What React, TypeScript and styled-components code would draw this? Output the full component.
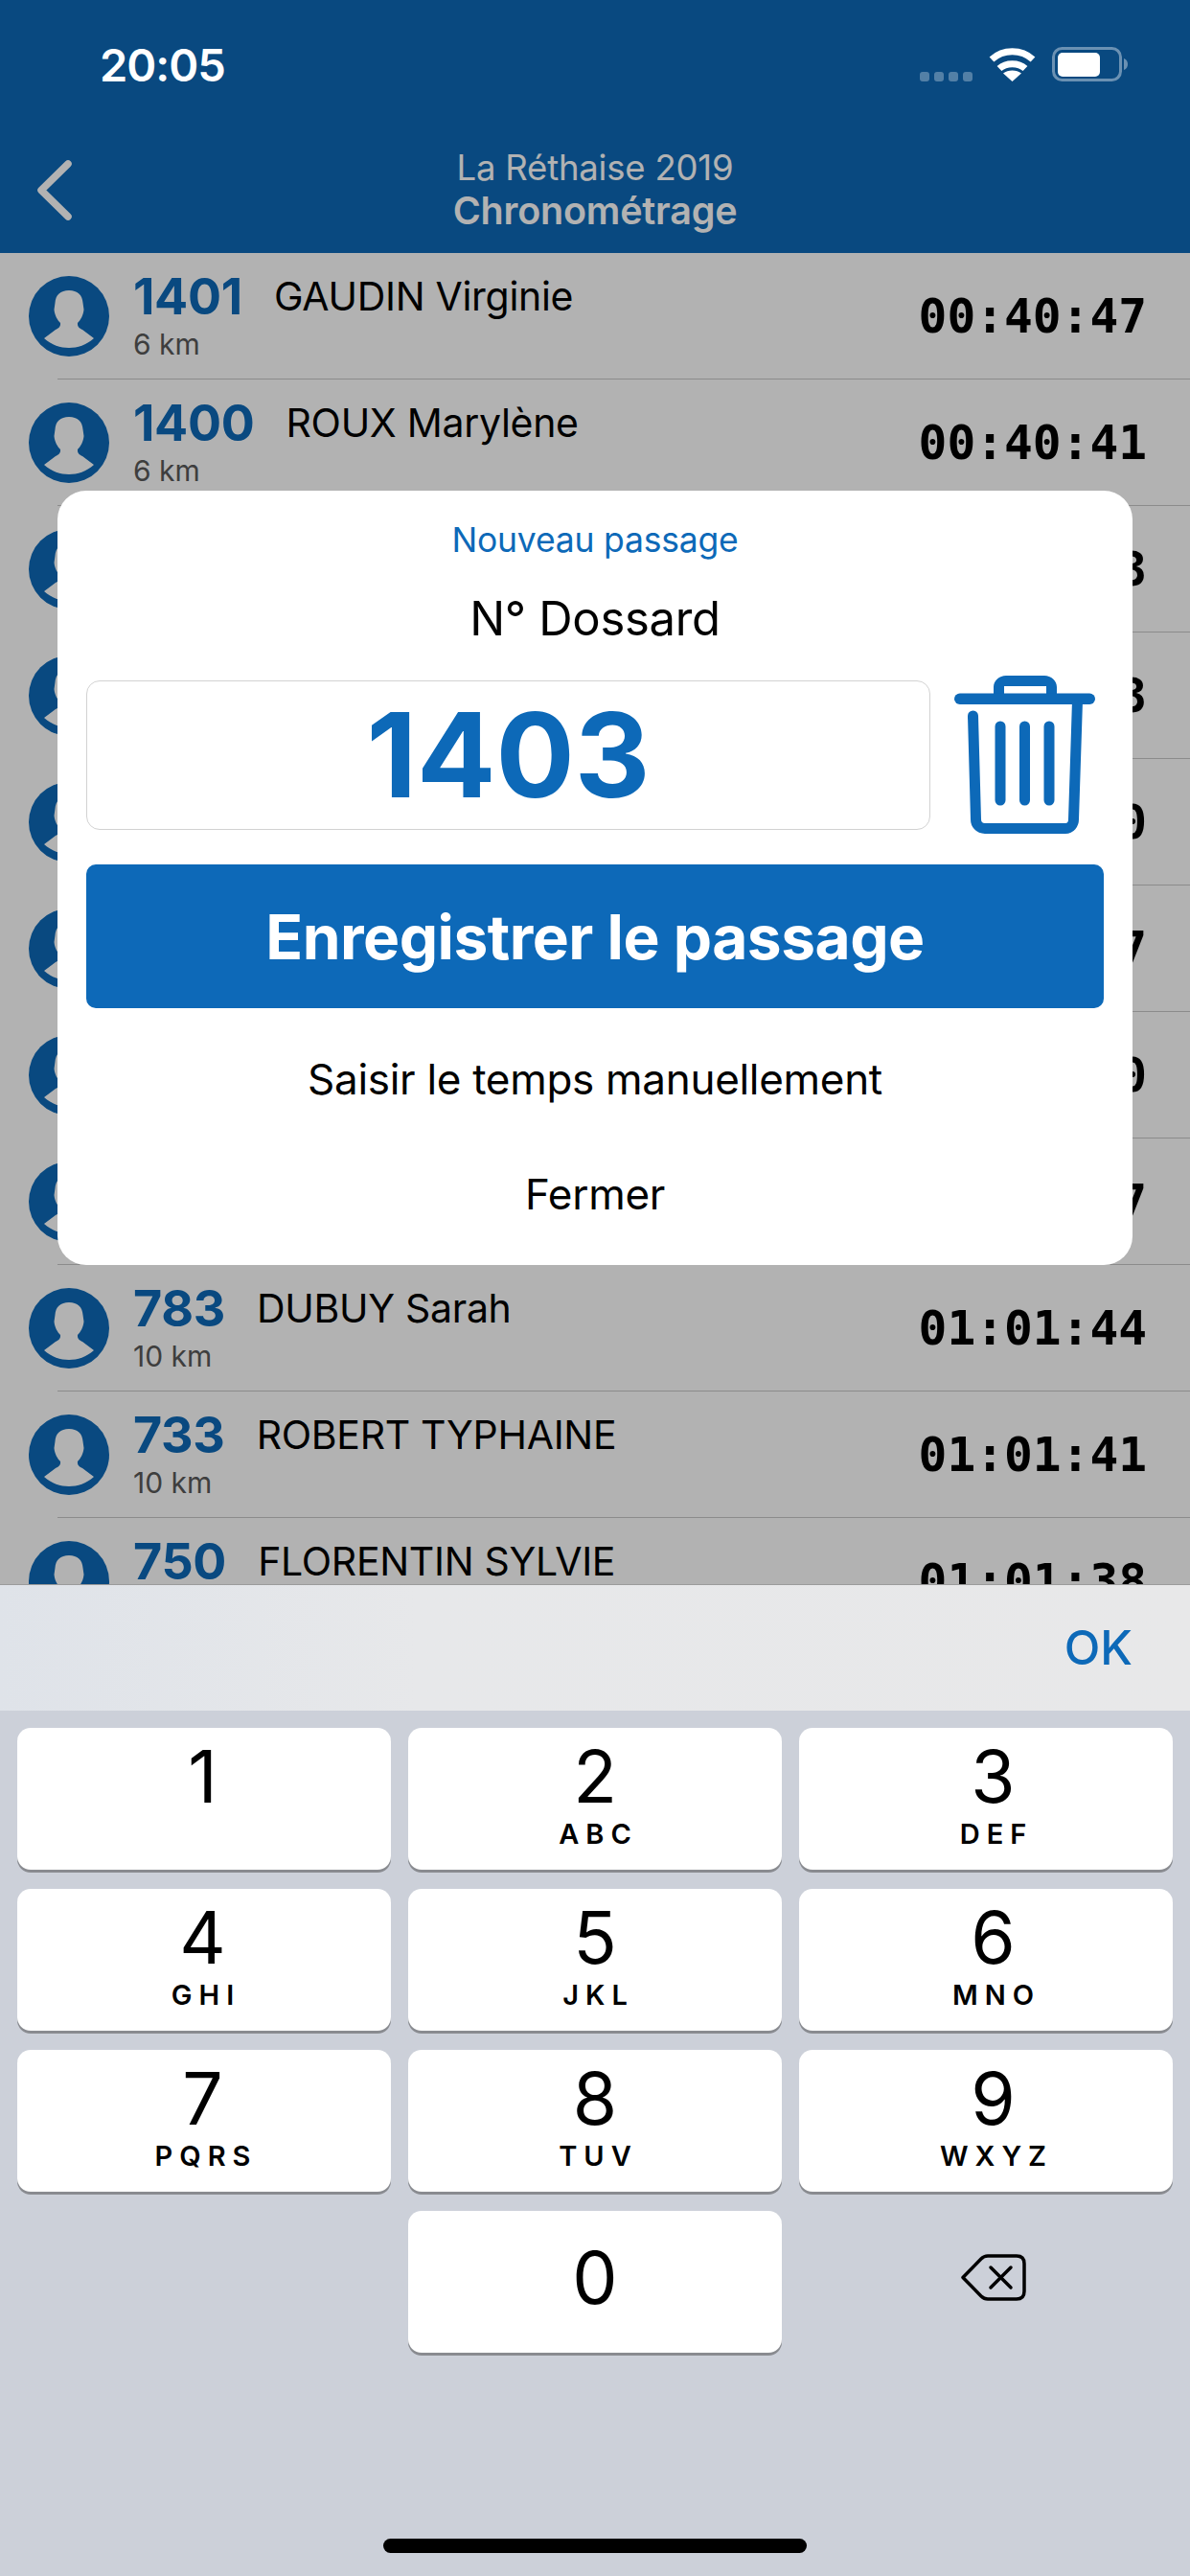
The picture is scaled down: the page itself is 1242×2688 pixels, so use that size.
import React from 'react';
import styled, { createGlobalStyle } from 'styled-components';

const BLUE = '#0d69b8';
const SANS = 'Inter, "Noto Sans", sans-serif';

const GlobalStyle = createGlobalStyle`
  html, body {
    margin: 0;
    padding: 0;
    background: #fff;
  }
  body {
    font-family: ${SANS};
  }
`;

const Page = styled.div`
  width: 1242px;
  height: 2688px;
  display: flex;
  flex-direction: column;
  overflow: hidden;
  background: #fff;
`;

const Upper = styled.div`
  position: relative;
  height: 1653px;
  display: flex;
  flex-direction: column;
  overflow: hidden;
`;

const Header = styled.header`
  height: 264px;
  flex: none;
  background: ${BLUE};
  display: flex;
  flex-direction: column;
`;

const StatusBar = styled.div`
  position: relative;
  z-index: 2;
  height: 132px;
  display: flex;
  align-items: flex-start;
  justify-content: space-between;
  padding: 49px 65px 0 104px;
  box-sizing: border-box;
`;

const Clock = styled.span`
  color: #fff;
  font-size: 47px;
  font-weight: 600;
  line-height: 38px;
  letter-spacing: -1px;
`;

const StatusIcons = styled.div`
  display: flex;
  align-items: flex-end;
`;

const SignalDots = styled.div`
  display: flex;
  gap: 5px;
  margin-right: 17px;
`;

const SignalDot = styled.i`
  display: block;
  width: 10px;
  height: 10px;
  border-radius: 3px;
  background: rgba(255, 255, 255, 0.3);
`;

const NavBar = styled.div`
  position: relative;
  flex: 1;
  display: flex;
  flex-direction: column;
  align-items: center;
  color: #fff;
  padding-top: 21px;
`;

const BackButton = styled.svg`
  position: absolute;
  left: 39px;
  top: 35px;
`;

const NavSub = styled.div`
  font-size: 36.5px;
  line-height: 44px;
  letter-spacing: -0.2px;
`;

const NavTitle = styled.div`
  font-size: 39.5px;
  font-weight: 600;
  line-height: 46px;
  letter-spacing: -0.2px;
`;

const List = styled.div`
  flex: 1;
  min-height: 0;
  overflow: hidden;
`;

const Row = styled.div`
  height: 131px;
  display: flex;
  align-items: flex-start;
  padding: 24px 45px 0 30px;
  box-sizing: border-box;
`;

const Separator = styled.div`
  height: 1px;
  margin-left: 60px;
  background: #c8c8c8;
`;

const Info = styled.div`
  flex: 1;
  margin-left: 25px;
  min-width: 0;
`;

const TopLine = styled.div`
  display: flex;
  align-items: baseline;
  height: 50px;
  margin-top: -3px;
`;

const Bib = styled.span`
  color: ${BLUE};
  font-size: 52px;
  font-weight: 700;
  line-height: 50px;
  margin-right: 33px;
  letter-spacing: -0.3px;
`;

const Name = styled.span`
  color: #000;
  font-size: 41px;
  line-height: 50px;
  position: relative;
  top: -4px;
  letter-spacing: -0.3px;
`;

const Distance = styled.div`
  color: #5a5a5a;
  font-size: 30px;
  line-height: 36px;
  margin-top: 6px;
`;

const Time = styled.span`
  flex: none;
  color: #000;
  font-family: 'DejaVu Sans Mono', monospace;
  font-size: 49.5px;
  font-weight: 700;
  line-height: 85px;
`;

const Backdrop = styled.div`
  position: absolute;
  inset: 0;
  z-index: 1;
  background: rgba(0, 0, 0, 0.3);
`;

const Dialog = styled.div`
  position: absolute;
  z-index: 3;
  top: 512px;
  left: 60px;
  width: 1122px;
  height: 808px;
  box-sizing: border-box;
  padding: 30px 30px 0;
  border-radius: 30px;
  background: #fff;
  display: flex;
  flex-direction: column;
  align-items: stretch;
`;

const DialogTitle = styled.div`
  color: ${BLUE};
  font-size: 35.5px;
  line-height: 44px;
  text-align: center;
  letter-spacing: -0.2px;
`;

const BibLabel = styled.div`
  color: #000;
  font-size: 49px;
  line-height: 60px;
  text-align: center;
  margin-top: 30px;
  letter-spacing: -0.3px;
`;

const EntryRow = styled.div`
  display: flex;
  align-items: center;
  justify-content: space-between;
  margin-top: 29px;
  padding-right: 9px;
  height: 165px;
`;

const BibInput = styled.div`
  width: 881px;
  height: 156px;
  box-sizing: border-box;
  border: 1.5px solid #d2d2d2;
  border-radius: 14px;
  display: flex;
  align-items: center;
  justify-content: center;
  color: ${BLUE};
  font-size: 122px;
  font-weight: 700;
`;

const SaveButton = styled.div`
  height: 150px;
  margin-top: 32px;
  border-radius: 10px;
  background: ${BLUE};
  color: #fff;
  font-size: 64px;
  font-weight: 700;
  letter-spacing: -0.5px;
  display: flex;
  align-items: center;
  justify-content: center;
`;

const DialogActions = styled.div`
  margin-top: 14px;
  display: flex;
  flex-direction: column;
`;

const DialogAction = styled.div`
  height: 120px;
  display: flex;
  align-items: center;
  justify-content: center;
  color: #000;
  font-size: 44px;
  letter-spacing: -0.3px;
`;

const Toolbar = styled.div`
  height: 132px;
  flex: none;
  box-sizing: border-box;
  border-top: 1px solid #9b9b9b;
  background: linear-gradient(90deg, #dfe3e9 0%, #e7e8ea 35%, #e8e8e9 100%);
  display: flex;
  align-items: center;
  justify-content: flex-end;
  padding-right: 60px;
`;

const ToolbarAction = styled.span`
  color: ${BLUE};
  font-size: 49px;
  font-weight: 500;
`;

const Keypad = styled.div`
  flex: 1;
  background: #ccd0d9;
  display: grid;
  grid-template-columns: repeat(3, 390px);
  grid-auto-rows: 148px;
  column-gap: 18px;
  row-gap: 20px;
  padding: 18px 18px 0;
  position: relative;
`;

const Key = styled.div<{ $column?: number }>`
  background: #fff;
  border-radius: 14px;
  box-shadow: 0 3px 0 #898b90;
  display: flex;
  flex-direction: column;
  align-items: center;
  box-sizing: border-box;
  padding-left: ${(p) => (p.$column === 2 ? '15px' : '0')};
  padding-right: ${(p) => (p.$column === 0 ? '3px' : '0')};
`;

const Digit = styled.span<{ $alone?: boolean }>`
  color: #000;
  font-size: 75px;
  font-weight: 400;
  line-height: 84px;
  margin-top: ${(p) => (p.$alone ? '28px' : '9px')};
`;

const Letters = styled.span`
  color: #000;
  font-size: 29px;
  font-weight: 600;
  line-height: 34px;
  letter-spacing: 7px;
  margin-right: -7px;
  margin-top: 1px;
`;

const EmptyKey = styled.div`
  box-sizing: border-box;
`;

const BackspaceKey = styled.div`
  display: flex;
  align-items: center;
  justify-content: center;
  padding: 0 0 8px 15px;
`;

const HomeBar = styled.div`
  position: absolute;
  left: 400px;
  bottom: 24px;
  width: 442px;
  height: 15px;
  border-radius: 8px;
  background: #000;
`;

const rows = [
  { bib: '1401', name: 'GAUDIN Virginie', km: '6 km', time: '00:40:47' },
  { bib: '1400', name: 'ROUX Marylène', km: '6 km', time: '00:40:41' },
  { time: '00:40:33' },
  { time: '00:40:23' },
  { time: '00:40:10' },
  { time: '01:02:07' },
  { time: '01:01:50' },
  { time: '01:01:47' },
  { bib: '783', name: 'DUBUY Sarah', km: '10 km', time: '01:01:44' },
  { bib: '733', name: 'ROBERT TYPHAINE', km: '10 km', time: '01:01:41' },
  { bib: '750', name: 'FLORENTIN SYLVIE', km: '10 km', time: '01:01:38' },
];

const keys = [
  ['1', ''],
  ['2', 'ABC'],
  ['3', 'DEF'],
  ['4', 'GHI'],
  ['5', 'JKL'],
  ['6', 'MNO'],
  ['7', 'PQRS'],
  ['8', 'TUV'],
  ['9', 'WXYZ'],
];

function Avatar() {
  return (
    <svg width="84" height="84" viewBox="0 0 84 84" style={{ flex: 'none' }}>
      <circle cx="42" cy="42" r="42" fill={BLUE} />
      <path
        fill="#fff"
        d="M42 15C33 15 28 20 27.500 28L26.500 35C27 41 30 46 33 49C33.500 53 31 54.500 28 56L16 65C24 72 33 75 42 75C51 75 60 72 68 65L56 56C53 54.500 50.500 53 51 49C54 46 57 41 57.500 35L56.500 28C56 20 51 15 42 15Z"
      />
    </svg>
  );
}

function Wifi() {
  return (
    <svg width="49" height="36" viewBox="0 0 49 36">
      <g fill="none" stroke="#fff" strokeWidth="7">
        <path d="M3 13C15 2 34 2 46 13" />
        <path d="M11 22.500C18 16 31 16 38 22.500" />
      </g>
      <path fill="#fff" d="M24.500 36L15 27.500C20 23.500 29 23.500 34 27.500Z" />
    </svg>
  );
}

function Battery() {
  return (
    <svg width="79" height="36" viewBox="0 0 79 36" style={{ marginLeft: 17 }}>
      <rect x="1.500" y="1.500" width="70" height="33" rx="9" fill="none" stroke="#fff" strokeOpacity="0.4" strokeWidth="3" />
      <rect x="6" y="6" width="44" height="25" rx="5" fill="#fff" />
      <path d="M75 12C78 13 79 15.500 79 18C79 20.500 78 23 75 24Z" fill="#fff" fillOpacity="0.4" />
    </svg>
  );
}

function TrashIcon() {
  return (
    <svg width="147" height="165" viewBox="36 26 147 165">
      <path
        fill={BLUE}
        d="M77 45V38C77 31 83 26 90 26H130C137 26 143 31 143 38V45H132V37H88V45Z"
      />
      <rect x="36" y="44.500" width="147" height="11.500" rx="5.750" fill={BLUE} />
      <g fill="none" stroke={BLUE} strokeWidth="11" strokeLinecap="round">
        <path d="M55.500 68L58.500 176C58.500 181 62 185.500 68 185.500H152C157 185.500 160.500 181 160.500 176L164.500 52" strokeLinecap="butt" />
        <path d="M55.500 68V69" />
        <path d="M84 79V156" />
        <path d="M109.500 79V156" />
        <path d="M135 79V156" />
      </g>
    </svg>
  );
}

function BackspaceIcon() {
  return (
    <svg width="68" height="50" viewBox="0 0 68 50">
      <g fill="none" stroke="#000" strokeWidth="3.500" strokeLinecap="round" strokeLinejoin="round">
        <path d="M2 24.500L21 5Q24 2 28 2H58Q66 2 66 10V39Q66 47 58 47H28Q24 47 21 44Z" />
        <path d="M31 14L52 35M52 14L31 35" />
      </g>
    </svg>
  );
}

export default function App() {
  return (
    <Page>
      <GlobalStyle />
      <Upper>
        <Header>
          <StatusBar>
            <Clock>20:05</Clock>
            <StatusIcons>
              <SignalDots>
                <SignalDot />
                <SignalDot />
                <SignalDot />
                <SignalDot />
              </SignalDots>
              <Wifi />
              <Battery />
            </StatusIcons>
          </StatusBar>
          <NavBar>
            <BackButton width="36" height="63" viewBox="0 0 36 63">
              <path d="M32 4L4 31.500L32 59" fill="none" stroke="#fff" strokeWidth="7.500" strokeLinecap="round" strokeLinejoin="round" />
            </BackButton>
            <NavSub>La Réthaise 2019</NavSub>
            <NavTitle>Chronométrage</NavTitle>
          </NavBar>
        </Header>

        <List>
          {rows.map((row, i) => (
            <React.Fragment key={i}>
              <Row>
                <Avatar />
                <Info>
                  <TopLine>
                    <Bib>{row.bib}</Bib>
                    <Name>{row.name}</Name>
                  </TopLine>
                  <Distance>{row.km}</Distance>
                </Info>
                <Time>{row.time}</Time>
              </Row>
              <Separator />
            </React.Fragment>
          ))}
        </List>

        <Backdrop />

        <Dialog>
          <DialogTitle>Nouveau passage</DialogTitle>
          <BibLabel>N° Dossard</BibLabel>
          <EntryRow>
            <BibInput>1403</BibInput>
            <TrashIcon />
          </EntryRow>
          <SaveButton>Enregistrer le passage</SaveButton>
          <DialogActions>
            <DialogAction>Saisir le temps manuellement</DialogAction>
            <DialogAction>Fermer</DialogAction>
          </DialogActions>
        </Dialog>
      </Upper>

      <Toolbar>
        <ToolbarAction>OK</ToolbarAction>
      </Toolbar>

      <Keypad>
        {keys.map(([digit, letters], i) => (
          <Key key={digit} $column={i % 3}>
            <Digit>{digit}</Digit>
            {letters && <Letters>{letters}</Letters>}
          </Key>
        ))}
        <EmptyKey />
        <Key>
          <Digit $alone>0</Digit>
        </Key>
        <BackspaceKey>
          <BackspaceIcon />
        </BackspaceKey>
        <HomeBar />
      </Keypad>
    </Page>
  );
}
